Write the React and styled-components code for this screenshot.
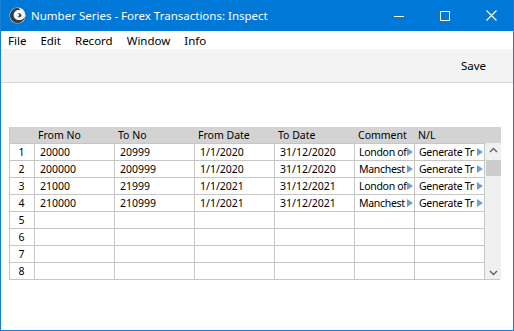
import React from 'react';
import styled, { createGlobalStyle } from 'styled-components';

const Global = createGlobalStyle`
    html, body {
        margin: 0;
        padding: 0;
        background: #fff;
    }
    * { box-sizing: border-box; }
`

const Window = styled.div`
    width: 514px;
    height: 331px;
    border: 1px solid #1a7fd4;
    border-top: none;
    display: flex;
    flex-direction: column;
    background: #fff;
    font-family: "Noto Sans", "Segoe UI", sans-serif;
    color: #000;
    overflow: hidden;
`

const TitleBar = styled.div`
    height: 31px;
    margin: 0 -1px;
    background: #0078d7;
    color: #fff;
    display: flex;
    align-items: center;
    font-size: 11.5px;
    padding-left: 9px;
`

const Title = styled.span`
    margin-left: 5px;
    flex: 1;
`

const Controls = styled.div`
    display: flex;
    height: 100%;
`

const Ctrl = styled.div`
    width: 46px;
    height: 100%;
    display: flex;
    align-items: center;
    justify-content: center;
`

const MenuBar = styled.div`
    height: 18px;
    display: flex;
    align-items: center;
    font-size: 11.5px;
    padding-left: 7px;
    gap: 14px;
`

const Toolbar = styled.div`
    height: 34px;
    background: #f3f3f4;
    border-bottom: 1px solid #dadada;
    display: flex;
    align-items: center;
    justify-content: flex-end;
    padding-right: 27px;
    font-size: 11.5px;
`

const Content = styled.div`
    padding: 44px 0 0 8px;
`

const Grid = styled.div`
    display: grid;
    grid-template-columns: 25px 80px 80px 80px 80px 60px 70px 16px;
    grid-template-rows: 16px repeat(8, 17px);
    width: 491px;
    font-size: 10.5px;
    border-left: 1px solid #c6c6c6;
    border-bottom: 1px solid #c6c6c6;
    border-right: 1px solid #c6c6c6;
`

const Head = styled.div`
    background: #d3d3d3;
    display: flex;
    align-items: center;
    padding-left: 3px;
    white-space: nowrap;
`

const HeadFill = styled(Head)`
    grid-column: span 2;
`

const Cell = styled.div`
    border-right: 1px solid #c6c6c6;
    border-top: 1px solid #c6c6c6;
    display: flex;
    align-items: center;
    justify-content: ${p => (p.$num ? 'center' : 'flex-start')};
    padding-left: ${p => (p.$num ? 0 : p.$pick ? 4 : 5)}px;
    padding-right: 1px;
    white-space: nowrap;
    overflow: hidden;
    background: #fff;
`

const Text = styled.span`
    flex: 1;
    min-width: 0;
    overflow: hidden;
    letter-spacing: ${p => (p.$tight ? '-0.3px' : '0')};
`

const Arrow = styled.span`
    flex: none;
    width: 0;
    height: 0;
    margin-top: -1px;
    border-top: 4px solid transparent;
    border-bottom: 4px solid transparent;
    border-left: 6px solid #6c9fd6;
`

const Scroll = styled.div`
    grid-column: 8;
    grid-row: 2 / span 8;
    background: #f0f0f0;
    display: flex;
    flex-direction: column;
    align-items: center;
    padding: 4px 0 3px;
`

const Thumb = styled.div`
    width: 15px;
    height: 16px;
    background: #cdcdcd;
    margin-top: 7px;
`

const Spacer = styled.div`
    flex: 1;
`

const Chevron = ({ down }) => (
    <svg width="9" height="6" viewBox="0 0 9 6">
        <path
            d={down ? 'M1 1 L4.5 4.5 L8 1' : 'M1 5 L4.5 1.5 L8 5'}
            fill="none"
            stroke="#606060"
            strokeWidth="1.4"
        />
    </svg>
)

const Logo = () => (
    <svg width="17" height="17" viewBox="0 0 17 17">
        <circle cx="8.5" cy="8.5" r="8" fill="#f6f7f8" />
        <path d="M8.5 0.8 A7.7 7.7 0 1 0 16.2 9.2 C14.5 13 10 14 7 12.2 C4.2 10.4 4 6.5 6.2 4.4 C7.6 3 9.6 2.6 11.4 3.2 C10.6 1.6 9.6 0.9 8.5 0.8 Z" fill="#34404c" />
        <path d="M8.8 6.4 C10.6 5.6 12.6 6.8 12.4 8.8 C11.6 10.4 9.6 10.8 8.4 9.8 C9.8 9.6 10.6 8.4 10 7.4 C9.7 6.9 9.3 6.6 8.8 6.4 Z" fill="#34404c" />
    </svg>
)

const heads = ['From No', 'To No', 'From Date', 'To Date', 'Comment']

const rows = [
    ['20000', '20999', '1/1/2020', '31/12/2020', 'London of', 'Generate Tr'],
    ['200000', '200999', '1/1/2020', '31/12/2020', 'Manchest', 'Generate Tr'],
    ['21000', '21999', '1/1/2021', '31/12/2021', 'London of', 'Generate Tr'],
    ['210000', '210999', '1/1/2021', '31/12/2021', 'Manchest', 'Generate Tr'],
]

const App = () => {
    const body = []
    for (let r = 0; r < 8; r++) {
        const d = rows[r] || ['', '', '', '', '', '']
        body.push(<Cell key={'n' + r} $num>{r + 1}</Cell>)
        d.forEach((v, i) => {
            const pick = i >= 4
            body.push(
                <Cell key={r + '-' + i} $pick={pick}>
                    <Text $tight={pick}>{v}</Text>
                    {pick && v && <Arrow />}
                </Cell>
            )
        })
    }

    return (
        <Window>
            <Global />
            <TitleBar>
                <Logo />
                <Title>Number Series - Forex Transactions: Inspect</Title>
                <Controls>
                    <Ctrl>
                        <svg width="10" height="10" viewBox="0 0 10 10"><path d="M0 5.5 H10" stroke="#fff" strokeWidth="1" /></svg>
                    </Ctrl>
                    <Ctrl>
                        <svg width="10" height="10" viewBox="0 0 10 10"><rect x="0.5" y="0.5" width="9" height="9" fill="none" stroke="#fff" strokeWidth="1" /></svg>
                    </Ctrl>
                    <Ctrl>
                        <svg width="11" height="11" viewBox="0 0 11 11"><path d="M0.5 0.5 L10.5 10.5 M10.5 0.5 L0.5 10.5" stroke="#fff" strokeWidth="1.1" /></svg>
                    </Ctrl>
                </Controls>
            </TitleBar>
            <MenuBar>
                <span>File</span>
                <span>Edit</span>
                <span>Record</span>
                <span>Window</span>
                <span>Info</span>
            </MenuBar>
            <Toolbar>Save</Toolbar>
            <Content>
                <Grid>
                    <Head />
                    {heads.map(h => <Head key={h}>{h}</Head>)}
                    <HeadFill>N/L</HeadFill>
                    {body}
                    <Scroll>
                        <Chevron />
                        <Thumb />
                        <Spacer />
                        <Chevron down />
                    </Scroll>
                </Grid>
            </Content>
        </Window>
    )
}

export default App;
